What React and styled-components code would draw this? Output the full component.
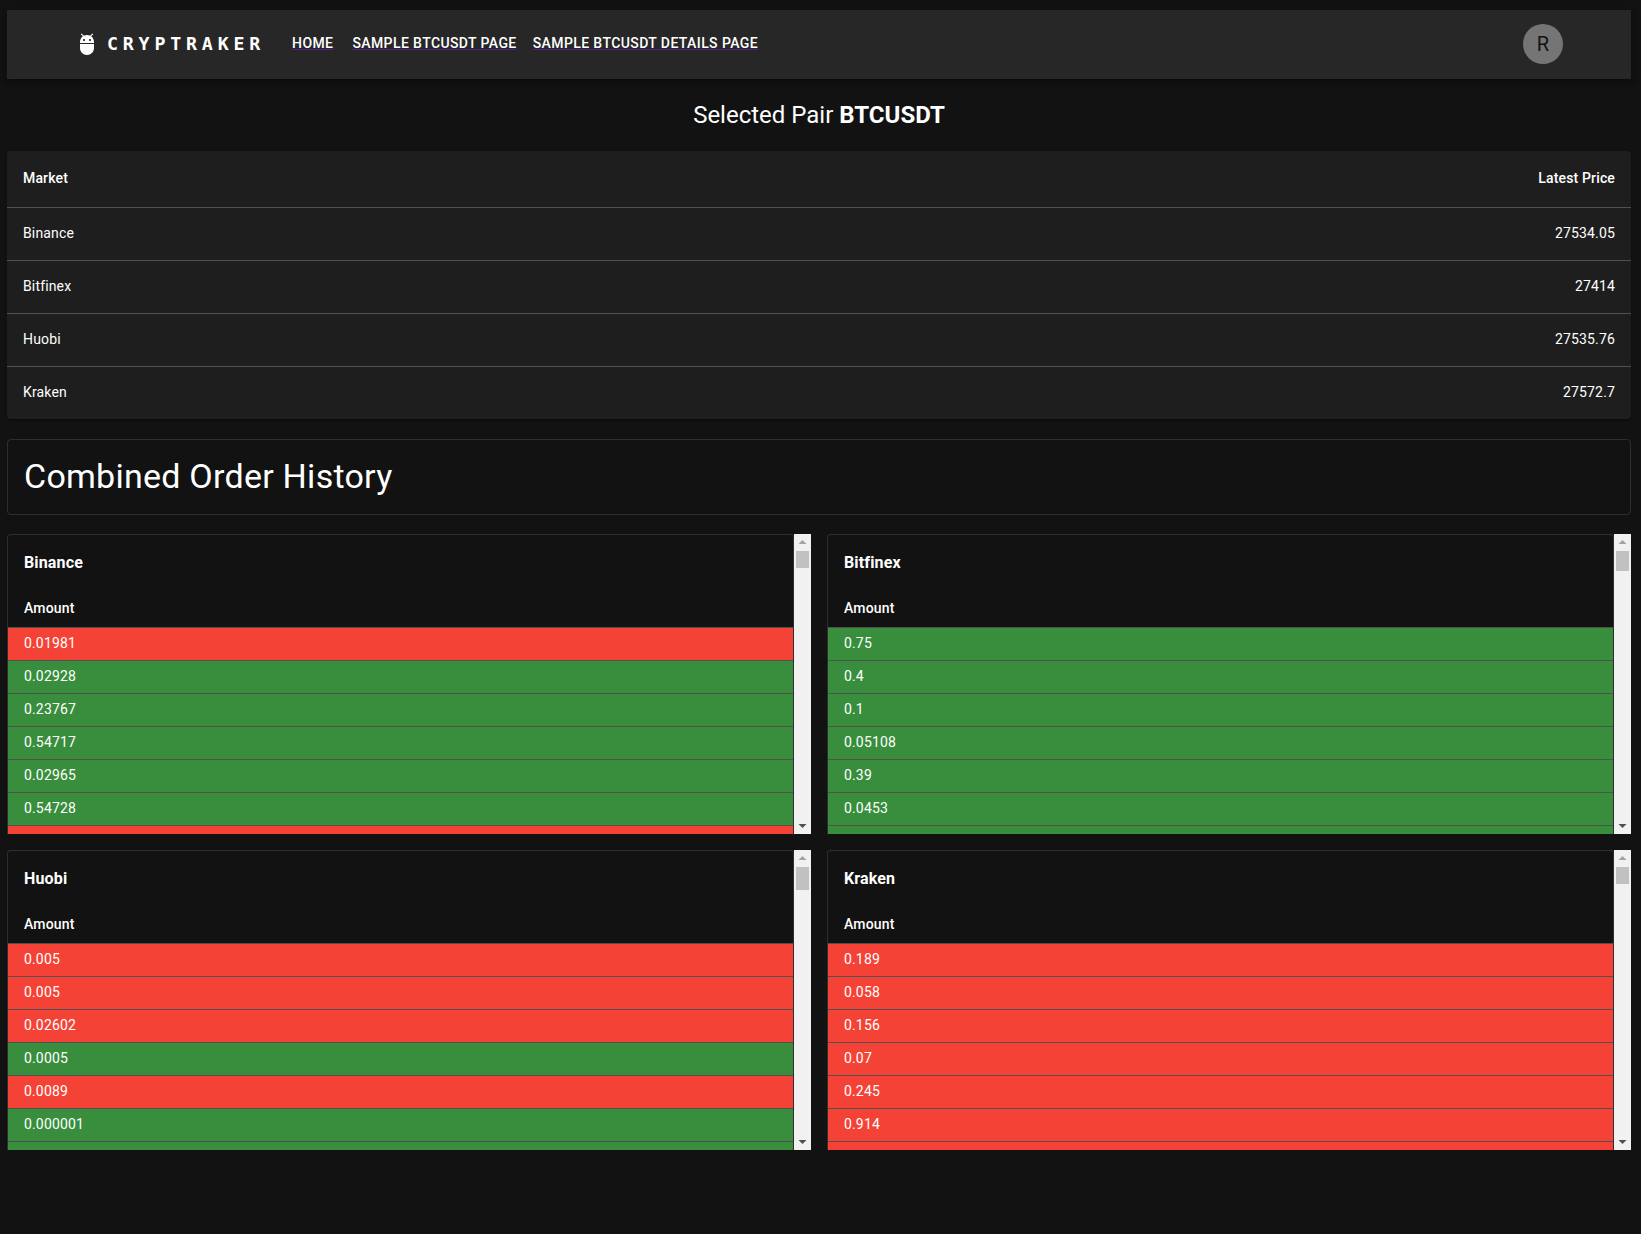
import React from 'react';
import styled, { createGlobalStyle } from 'styled-components';

const Global = createGlobalStyle`
  html, body { margin: 0; padding: 0; background: #121212; }
  body { color: #fff; font-family: Roboto, "Liberation Sans", sans-serif; font-size: 14px; letter-spacing: 0.15px; }
  * { box-sizing: border-box; }
`;

const Page = styled.div`
  min-height: 1234px;
  padding: 10px 10px 0 7px;
  background: #121212;
`;

const Header = styled.header`
  height: 69px;
  display: flex;
  align-items: center;
  padding: 0 68px 2px 68px;
  background: #272727;
  box-shadow: 0 2px 4px -1px rgba(0,0,0,.2), 0 4px 5px rgba(0,0,0,.14), 0 1px 10px rgba(0,0,0,.12);
`;

const LogoIcon = styled.svg`
  width: 24px;
  height: 24px;
  fill: #fff;
  margin-right: 8px;
  flex: none;
`;

const Brand = styled.div`
  font-family: "DejaVu Sans Mono", monospace;
  font-weight: 700;
  font-size: 18.3px;
  letter-spacing: 4.8px;
  margin-right: 27px;
`;

const Nav = styled.nav`
  display: flex;
  flex: 1;
  align-items: center;
  padding-bottom: 1px;
`;

const NavLink = styled.a`
  color: #fff;
  font-weight: 500;
  font-size: 14px;
  letter-spacing: 0.4px;
  line-height: 24px;
  text-transform: uppercase;
  text-decoration: underline;
  text-decoration-color: #551a8b;
  margin-right: ${p => p.$gap}px;
  cursor: pointer;
`;

const Avatar = styled.div`
  width: 40px;
  height: 40px;
  border-radius: 50%;
  background: #757575;
  color: #121212;
  font-size: 20px;
  letter-spacing: 0;
  display: flex;
  align-items: center;
  justify-content: center;
`;

const Heading = styled.h2`
  margin: 0;
  height: 72px;
  display: flex;
  align-items: center;
  justify-content: center;
  gap: 6px;
  font-size: 24px;
  font-weight: 400;
  letter-spacing: 0;
  b { font-weight: 700; }
`;

const PriceCard = styled.div`
  background: #1e1e1e;
  border-radius: 4px;
  box-shadow: 0 2px 1px -1px rgba(0,0,0,.2), 0 1px 1px rgba(0,0,0,.14), 0 1px 3px rgba(0,0,0,.12);
  overflow: hidden;
`;

const PriceRow = styled.div`
  display: flex;
  justify-content: space-between;
  padding: 15px 16px 17px;
  line-height: ${p => (p.$head ? 24 : 20)}px;
  font-weight: ${p => (p.$head ? 500 : 400)};
  border-bottom: 1px solid #515151;
  &:last-child { border-bottom: 0; }
`;

const HistoryBanner = styled.div`
  margin: 20px 0 19px;
  height: 76px;
  border: 1px solid #2e2e2e;
  border-radius: 4px;
  padding: 0 16px 2px;
  display: flex;
  align-items: center;
`;

const HistoryTitle = styled.h1`
  margin: 0;
  font-size: 34px;
  font-weight: 400;
  letter-spacing: 0.25px;
  line-height: 42px;
`;

const Grid = styled.div`
  display: grid;
  grid-template-columns: 1fr 1fr;
  gap: 16px;
`;

const Frame = styled.section`
  height: 300px;
  display: flex;
  overflow: hidden;
`;

const Sheet = styled.div`
  flex: 1;
  min-width: 0;
  border: 1px solid #2e2e2e;
  border-bottom: 0;
  border-radius: 4px 4px 0 0;
  overflow: hidden;
`;

const ExchangeName = styled.h3`
  margin: 0;
  padding: 16px;
  font-size: 16px;
  font-weight: 700;
  letter-spacing: 0.15px;
  line-height: 24px;
`;

const AmountHead = styled.div`
  padding: 5px 16px 7px;
  height: 37px;
  line-height: 24px;
  font-weight: 500;
  border-bottom: 1px solid #515151;
`;

const OrderRow = styled.div`
  padding: 5px 16px 7px;
  height: 33px;
  line-height: 20px;
  background: ${p => (p.$side === 'sell' ? '#f44336' : '#388e3c')};
  border-bottom: 1px solid #515151;
`;

const Scrollbar = styled.div`
  width: 17px;
  flex: none;
  background: #f1f1f1;
  display: flex;
  flex-direction: column;
  align-items: center;
`;

const ArrowSlot = styled.svg`
  width: 17px;
  height: 17px;
  flex: none;
  fill: ${p => p.$fill};
`;

const Track = styled.div`
  flex: 1;
  width: 100%;
  padding: 0 2px;
`;

const Thumb = styled.div`
  height: ${p => p.$h}px;
  background: #c1c1c1;
`;

const prices = [
  ['Binance', '27534.05'],
  ['Bitfinex', '27414'],
  ['Huobi', '27535.76'],
  ['Kraken', '27572.7'],
];

const s = 'sell';
const b = 'buy';
const books = [
  { name: 'Binance', thumb: 17, rows: [['0.01981', s], ['0.02928', b], ['0.23767', b], ['0.54717', b], ['0.02965', b], ['0.54728', b], ['\u00a0', s]] },
  { name: 'Bitfinex', thumb: 20, rows: [['0.75', b], ['0.4', b], ['0.1', b], ['0.05108', b], ['0.39', b], ['0.0453', b], ['\u00a0', b]] },
  { name: 'Huobi', thumb: 23, rows: [['0.005', s], ['0.005', s], ['0.02602', s], ['0.0005', b], ['0.0089', s], ['0.000001', b], ['\u00a0', b]] },
  { name: 'Kraken', thumb: 17, rows: [['0.189', s], ['0.058', s], ['0.156', s], ['0.07', s], ['0.245', s], ['0.914', s], ['\u00a0', s]] },
];

function OrderBook({ name, thumb, rows }) {
  return (
    <Frame>
      <Sheet>
        <ExchangeName>{name}</ExchangeName>
        <AmountHead>Amount</AmountHead>
        {rows.map(([amount, side], i) => (
          <OrderRow key={i} $side={side}>{amount}</OrderRow>
        ))}
      </Sheet>
      <Scrollbar>
        <ArrowSlot viewBox="0 0 17 17" $fill="#a3a3a3"><path d="M8.5 6 L12.5 10 H4.5 Z" /></ArrowSlot>
        <Track><Thumb $h={thumb} /></Track>
        <ArrowSlot viewBox="0 0 17 17" $fill="#505050"><path d="M4.5 7 H12.5 L8.5 11 Z" /></ArrowSlot>
      </Scrollbar>
    </Frame>
  );
}

export default function App() {
  return (
    <Page>
      <Global />
      <Header>
        <LogoIcon viewBox="0 0 24 24">
          <path d="M5 16c0 3.87 3.13 7 7 7s7-3.13 7-7v-4H5v4zM16.12 4.37l2.1-2.1-.82-.83-2.3 2.31C14.16 3.28 13.12 3 12 3s-2.16.28-3.09.75L6.6 1.44l-.82.83 2.1 2.1C6.14 5.64 5 7.68 5 10v1h14v-1c0-2.32-1.14-4.36-2.88-5.63zM9 9c-.55 0-1-.45-1-1s.45-1 1-1 1 .45 1 1-.45 1-1 1zm6 0c-.55 0-1-.45-1-1s.45-1 1-1 1 .45 1 1-.45 1-1 1z" />
        </LogoIcon>
        <Brand>CRYPTRAKER</Brand>
        <Nav>
          <NavLink $gap={19}>Home</NavLink>
          <NavLink $gap={16}>Sample BTCUSDT Page</NavLink>
          <NavLink $gap={0}>Sample BTCUSDT Details Page</NavLink>
        </Nav>
        <Avatar>R</Avatar>
      </Header>
      <Heading>Selected Pair <b>BTCUSDT</b></Heading>
      <PriceCard>
        <PriceRow $head><span>Market</span><span>Latest Price</span></PriceRow>
        {prices.map(([m, p]) => (
          <PriceRow key={m}><span>{m}</span><span>{p}</span></PriceRow>
        ))}
      </PriceCard>
      <HistoryBanner><HistoryTitle>Combined Order History</HistoryTitle></HistoryBanner>
      <Grid>
        {books.map(book => <OrderBook key={book.name} {...book} />)}
      </Grid>
    </Page>
  );
}
